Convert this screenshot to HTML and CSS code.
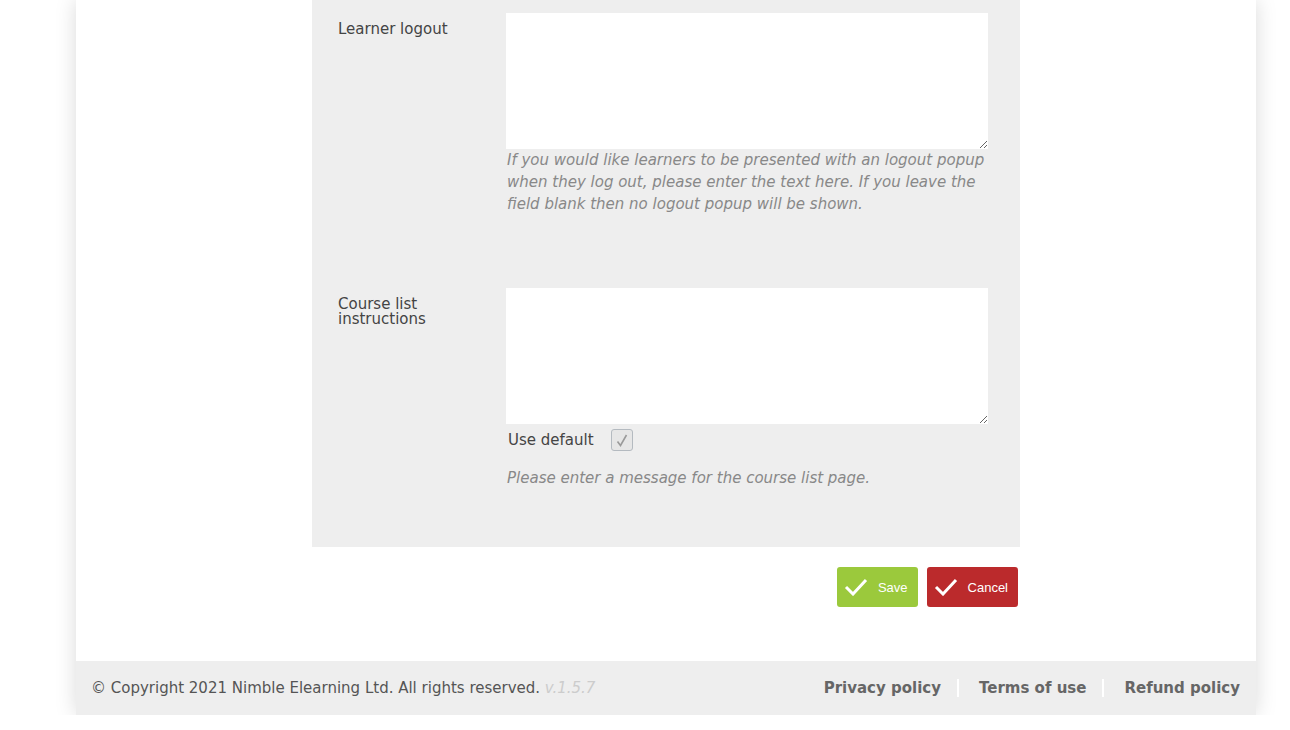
FILE: index.html
```html
<!DOCTYPE html>
<html lang="en">
<head>
    <meta charset="UTF-8">
    <meta name="viewport" content="width=device-width, initial-scale=1.0">
    <title>Settings</title>
    <link rel="stylesheet" href="styles.css">
</head>
<body>

<div class="page">
    <div class="content">
        <form class="settings-form">
            <div class="form-panel">
                <div class="form-row row-logout">
                    <label class="row-label" for="learner_logout">Learner logout</label>
                    <div class="row-field">
                        <textarea id="learner_logout" name="learner_logout"></textarea>
                        <p class="help-text">If you would like learners to be presented with an logout popup when they log out, please enter the text here. If you leave the field blank then no logout popup will be shown.</p>
                    </div>
                </div>

                <div class="form-row row-courselist">
                    <label class="row-label" for="course_list">Course list instructions</label>
                    <div class="row-field">
                        <textarea id="course_list" name="course_list"></textarea>
                        <div class="default-group">
                            <span>Use default</span>
                            <span class="fake-check">
                                <svg width="12" height="13" viewBox="0 0 12 13"><polyline points="1.5,7.5 4.5,11.5 10.5,1" fill="none" stroke="#9a9a9a" stroke-width="1.6"/></svg>
                            </span>
                        </div>
                        <p class="help-text">Please enter a message for the course list page.</p>
                    </div>
                </div>
            </div>

            <div class="button-group">
                <button type="submit" class="btn btn-save">
                    <svg width="24" height="18" viewBox="0 0 24 18"><polyline points="2,9 9,16 22,2" fill="none" stroke="#fff" stroke-width="3"/></svg>
                    Save
                </button>
                <button type="reset" class="btn btn-cancel">
                    <svg width="24" height="18" viewBox="0 0 24 18"><polyline points="2,9 9,16 22,2" fill="none" stroke="#fff" stroke-width="3"/></svg>
                    Cancel
                </button>
            </div>
        </form>
    </div>

    <div class="footer">
        <div class="copyright">&copy; Copyright 2021 Nimble Elearning Ltd. All rights reserved. <span class="version">v.1.5.7</span></div>
        <div class="footer-links">
            <a href="#">Privacy policy</a>
            <a href="#">Terms of use</a>
            <a href="#">Refund policy</a>
        </div>
    </div>
</div>

</body>
</html>
```

FILE: styles.css
```css
/* Halaman */
body {
    margin: 0;
    background-color: #fff;
    font-family: "DejaVu Sans", Verdana, sans-serif;
    font-size: 15px;
    color: #444;
}

.page {
    width: 1180px;
    margin-left: 76px;
    background-color: #fff;
    box-shadow: 0 0 20px rgba(0, 0, 0, 0.15);
}

.content {
    padding-bottom: 54px;
}

/* Panel form abu-abu */
.form-panel {
    width: 708px;
    margin: 0 auto;
    background-color: #eee;
    padding: 13px 0 58px;
    box-sizing: border-box;
}

.form-row {
    display: flex;
}

.row-logout {
    margin-bottom: 73px;
}

.row-label {
    width: 194px;
    flex-shrink: 0;
    padding-left: 26px;
    box-sizing: border-box;
    color: #444;
}

.row-logout .row-label {
    padding-top: 7px;
}

.row-courselist .row-label {
    line-height: 15px;
    padding-top: 9px;
}

.row-field {
    width: 482px;
}

textarea {
    display: block;
    width: 482px;
    height: 136px;
    border: none;
    background-color: #fff;
    box-sizing: border-box;
    font-family: inherit;
    font-size: 14px;
    margin: 0;
}

.help-text {
    margin: 0;
    padding-left: 1px;
    font-style: italic;
    color: #888;
    line-height: 22px;
}

/* Use default */
.default-group {
    display: flex;
    align-items: center;
    height: 28px;
    margin-top: 2px;
    padding-left: 2px;
}

.fake-check {
    display: inline-flex;
    align-items: center;
    justify-content: center;
    width: 20px;
    height: 20px;
    margin-left: 17px;
    border: 1px solid #b4bac0;
    border-radius: 3px;
    background-color: #e6e6e6;
}

.row-courselist .help-text {
    margin-top: 13px;
}

/* Tombol */
.button-group {
    width: 708px;
    margin: 20px auto 0;
    display: flex;
    justify-content: flex-end;
    gap: 9px;
    padding-right: 2px;
    box-sizing: border-box;
}

.btn {
    height: 40px;
    display: flex;
    align-items: center;
    gap: 10px;
    padding: 0 10px 0 7px;
    border: none;
    border-radius: 3px;
    color: #fff;
    font-family: "Liberation Sans", Arial, sans-serif;
    font-size: 13px;
    cursor: pointer;
}

.btn-save {
    background-color: #9bc93c;
}

.btn-cancel {
    background-color: #bb2a2c;
}

/* Footer */
.footer {
    height: 54px;
    background-color: #eee;
    display: flex;
    align-items: center;
    justify-content: space-between;
    padding: 0 16px 0 15px;
    color: #555;
}

.version {
    font-style: italic;
    color: #ccc;
}

.footer-links {
    display: flex;
    align-items: center;
}

.footer-links a {
    color: #666;
    font-weight: bold;
    text-decoration: none;
    padding: 0 16px 0 20px;
    border-left: 2px solid #fff;
    line-height: 18px;
}

.footer-links a:first-child {
    border-left: none;
}

.footer-links a:last-child {
    padding-right: 0;
}
```
